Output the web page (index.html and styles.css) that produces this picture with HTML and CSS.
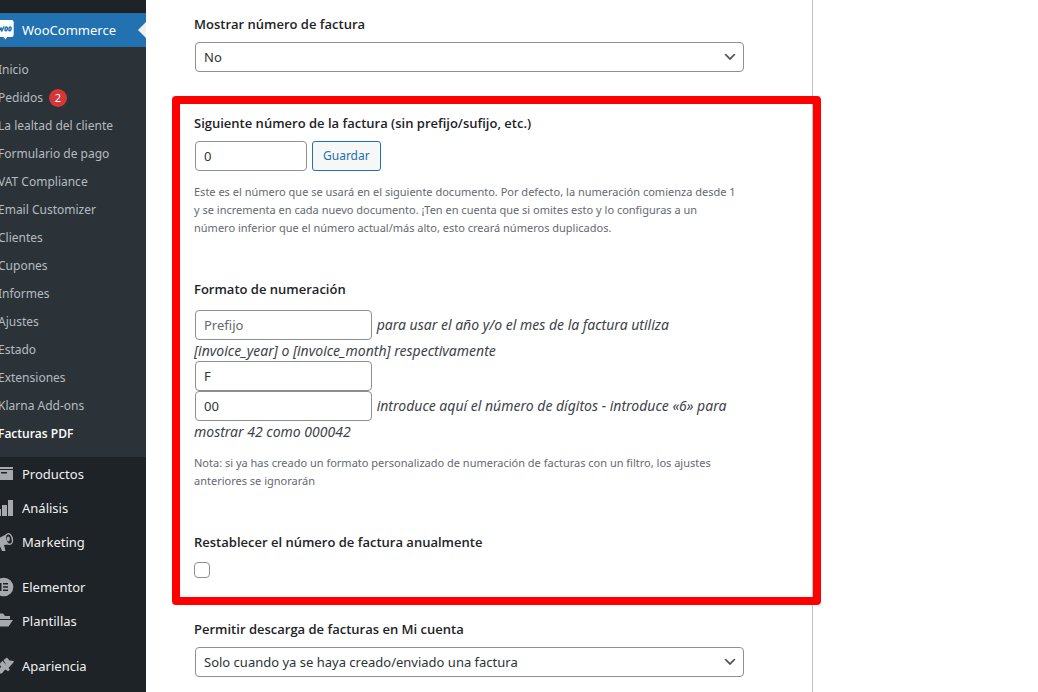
FILE: index.html
```html
<!DOCTYPE html>
<html lang="es">
<head>
<meta charset="utf-8">
<meta name="viewport" content="width=device-width, initial-scale=1">
<title>Facturas PDF</title>
<link rel="stylesheet" href="styles.css">
</head>
<body>
<nav class="sidebar" aria-label="Menú principal">
  <ul class="menu">
    <li>
      <a class="menu-link current" href="#">
        <svg class="icon" viewBox="0 0 20 20" aria-hidden="true"><path fill="#fff" d="M2 0h15.500a2.200 2.200 0 0 1 2.200 2.200v12.600a2.200 2.200 0 0 1-2.200 2.200H13l-1.500 2.500L9.500 17H2z"/><path fill="none" stroke="#2271b1" stroke-width="1.600" stroke-linecap="round" stroke-linejoin="round" d="M4 7l1 4 2-3 .8 3 2-4"/><ellipse cx="12.200" cy="8.900" rx="1.100" ry="1.900" transform="rotate(12 12.200 8.900)" fill="none" stroke="#2271b1" stroke-width="1.500"/><ellipse cx="16" cy="8.900" rx="1.100" ry="1.900" transform="rotate(12 16 8.900)" fill="none" stroke="#2271b1" stroke-width="1.500"/></svg>
        WooCommerce
      </a>
      <ul class="submenu">
        <li><a href="#">Inicio</a></li>
        <li><a href="#">Pedidos <span class="badge">2</span></a></li>
        <li><a href="#">La lealtad del cliente</a></li>
        <li><a href="#">Formulario de pago</a></li>
        <li><a href="#">VAT Compliance</a></li>
        <li><a href="#">Email Customizer</a></li>
        <li><a href="#">Clientes</a></li>
        <li><a href="#">Cupones</a></li>
        <li><a href="#">Informes</a></li>
        <li><a href="#">Ajustes</a></li>
        <li><a href="#">Estado</a></li>
        <li><a href="#">Extensiones</a></li>
        <li><a href="#">Klarna Add-ons</a></li>
        <li><a class="active" href="#">Facturas PDF</a></li>
      </ul>
    </li>
    <li><a class="menu-link" href="#"><svg class="icon" viewBox="0 0 20 20" aria-hidden="true"><path fill="#a7aaad" fill-rule="evenodd" d="M1 3h18v2H1zM1.500 6H19v10H1.500zM7 8v1.500h6V8z"/></svg>Productos</a></li>
    <li><a class="menu-link" href="#"><svg class="icon" viewBox="0 0 20 20" aria-hidden="true"><path fill="#a7aaad" d="M2 11h5v7H2zM8 7h5v11H8zM14 2h5v16h-5z"/></svg>Análisis</a></li>
    <li><a class="menu-link" href="#"><svg class="icon" viewBox="0 0 20 20" aria-hidden="true"><path fill="#a7aaad" d="M2 7.500l12-6c-2 4-1 8 1.500 11l-5.500.5 1.500 6H8L5.500 13H3C1.500 12 1.200 9 2 7.500z"/><ellipse cx="15" cy="7" rx="3.300" ry="5.300" transform="rotate(-14 15 7)" fill="#1d2327" stroke="#a7aaad" stroke-width="1.500"/><ellipse cx="14.300" cy="7" rx="1.500" ry="2.400" fill="#a7aaad"/></svg>Marketing</a></li>
    <li class="spaced"><a class="menu-link" href="#"><svg class="icon" viewBox="0 0 20 20" aria-hidden="true"><circle cx="10" cy="10" r="9.300" fill="#a7aaad"/><path fill="#1d2327" d="M6 6h1.500v8H6zM9 6h5v1.500H9zM9 9.200h5v1.500H9zM9 12.500h5V14H9z"/></svg>Elementor</a></li>
    <li><a class="menu-link" href="#"><svg class="icon" viewBox="0 0 20 20" aria-hidden="true"><path fill="#a7aaad" d="M1 2.500h8l2 2.500h5v3H5l-3 5H1zM6 9h13l-4.500 6.500H2z"/></svg>Plantillas</a></li>
    <li class="spaced"><a class="menu-link" href="#"><svg class="icon" viewBox="0 0 20 20" aria-hidden="true"><path fill="#a7aaad" d="M9.500 4l3.500-2.500 2.500 3 4.500.5-1 2-5 5.500zM8.500 4.800l7.300 8.700-1.600 1.700-3-1.700-3 3.500c-2 1.500-5 1-5.500-1s3-3.500 4.500-5L5.500 8z"/></svg>Apariencia</a></li>
  </ul>
</nav>

<main class="page">
  <form class="panel">
    <div class="field">
      <label class="title" for="show-number">Mostrar número de factura</label>
      <select class="control wide" id="show-number"><option>No</option></select>
    </div>

    <section class="highlight">
      <div class="field">
        <label class="title" for="next-number">Siguiente número de la factura (sin prefijo/sufijo, etc.)</label>
        <div class="row">
          <input class="control short" id="next-number" type="text" value="0">
          <button class="button" type="button">Guardar</button>
        </div>
        <p class="help">Este es el número que se usará en el siguiente documento. Por defecto, la numeración comienza desde 1<br>y se incrementa en cada nuevo documento. ¡Ten en cuenta que si omites esto y lo configuras a un<br>número inferior que el número actual/más alto, esto creará números duplicados.</p>
      </div>

      <div class="field format">
        <label class="title" for="prefix">Formato de numeración</label>
        <div class="line"><input class="control medium" id="prefix" type="text" placeholder="Prefijo"> <em>para usar el año y/o el mes de la factura utiliza [invoice_year] o [invoice_month] respectivamente</em></div>
        <div class="line"><input class="control medium" type="text" aria-label="Sufijo" value="F"></div>
        <div class="line"><input class="control medium" type="text" aria-label="Número de dígitos" value="00"> <em>introduce aquí el número de dígitos - introduce «6» para mostrar 42 como 000042</em></div>
        <p class="help">Nota: si ya has creado un formato personalizado de numeración de facturas con un filtro, los ajustes anteriores se ignorarán</p>
      </div>

      <div class="field">
        <label class="title" for="reset-yearly">Restablecer el número de factura anualmente</label>
        <input class="check" id="reset-yearly" type="checkbox">
      </div>
    </section>

    <div class="field">
      <label class="title" for="allow-download">Permitir descarga de facturas en Mi cuenta</label>
      <select class="control wide" id="allow-download"><option>Solo cuando ya se haya creado/enviado una factura</option></select>
    </div>
  </form>
</main>
</body>
</html>
```
FILE: styles.css
```css
* {
  box-sizing: border-box;
}

body {
  margin: 0;
  display: flex;
  min-height: 100vh;
  background: #fff;
  color: #3c434a;
  font: 13px/18px "Noto Sans", "Open Sans", sans-serif;
}

/* Sidebar */

.sidebar {
  flex: 0 0 146px;
  padding-top: 13px;
  overflow: hidden;
  background: #1d2327;
}

.menu,
.submenu {
  margin: 0;
  padding: 0;
  list-style: none;
}

.menu {
  margin-left: -14px;
}

.menu a {
  text-decoration: none;
}

.menu-link {
  display: flex;
  align-items: center;
  gap: 8px;
  height: 34px;
  padding-left: 8px;
  color: #f0f0f1;
}

.icon {
  flex: none;
  width: 20px;
  height: 20px;
}

.menu-link.current {
  position: relative;
  background: #2271b1;
  color: #fff;
}

.menu-link.current::after {
  content: "";
  position: absolute;
  top: 9px;
  right: 0;
  border: 8px solid transparent;
  border-left-width: 0;
  border-right-color: #f0f0f1;
}

.spaced {
  margin-top: 11px;
}

.submenu {
  padding: 9px 0;
  background: #2c3338;
  font-size: 12px;
}

.submenu a {
  display: flex;
  align-items: center;
  gap: 6px;
  padding: 5px 12px;
  color: #b5bbc0;
}

.submenu .active {
  color: #fff;
  font-family: "Open Sans", "Noto Sans", sans-serif;
  font-weight: 600;
}

.badge {
  width: 18px;
  height: 18px;
  border-radius: 9px;
  background: #d63638;
  color: #fff;
  font-size: 11px;
  text-align: center;
}

/* Settings panel */

.page {
  flex: 1;
  display: flex;
  padding-right: 225px;
}

.panel {
  flex: 1;
  padding: 15px 68px 15px 48px;
  border-right: 1px solid #c3c4c7;
}

.title {
  display: block;
  margin-bottom: 9px;
  color: #1d2327;
  font-family: "Open Sans", "Noto Sans", sans-serif;
  font-weight: 600;
}

.control {
  height: 30px;
  margin: 0 1px;
  padding: 0 8px;
  border: 1px solid #8c8f94;
  border-radius: 4px;
  background-color: #fff;
  color: #2c3338;
  font: 13px/18px "Noto Sans", "Open Sans", sans-serif;
}

.control::placeholder {
  color: #646970;
  opacity: 1;
}

.wide {
  display: block;
  width: calc(100% - 1px);
  margin-right: 0;
  appearance: none;
  background-image: url("data:image/svg+xml,%3Csvg xmlns='http://www.w3.org/2000/svg' viewBox='0 0 20 20'%3E%3Cpath d='M5 6l5 5 5-5 2 1-7 7-7-7 2-1z' fill='%23555'/%3E%3C/svg%3E");
  background-repeat: no-repeat;
  background-position: right 5px center;
  background-size: 16px 16px;
}

.short {
  width: 112px;
}

.medium {
  width: 177px;
}

.row {
  display: flex;
  gap: 4px;
}

.button {
  height: 30px;
  padding: 0 10px;
  border: 1px solid #2271b1;
  border-radius: 3px;
  background: #f6f7f7;
  color: #2271b1;
  font: 12px/18px "Noto Sans", "Open Sans", sans-serif;
}

.help {
  margin: 12px 0 0;
  color: #646970;
  font-size: 11px;
}

.line {
  font-size: 14px;
  line-height: 21px;
}

.format .title {
  margin-bottom: 12px;
}

/* Outlined group, drawn over the panel edge */

.highlight {
  position: relative;
  display: grid;
  gap: 43px;
  margin: 24px 0 15px;
  padding: 18px 0 27px;
}

.highlight::after {
  content: "";
  position: absolute;
  inset: 0 -77px 0 -22px;
  border: 8px solid #f00;
  border-radius: 4px;
  pointer-events: none;
}

.check {
  display: block;
  appearance: none;
  width: 16px;
  height: 16px;
  margin: 11px 0 0;
  border: 1px solid #8c8f94;
  border-radius: 4px;
  background: #fff;
}
```
